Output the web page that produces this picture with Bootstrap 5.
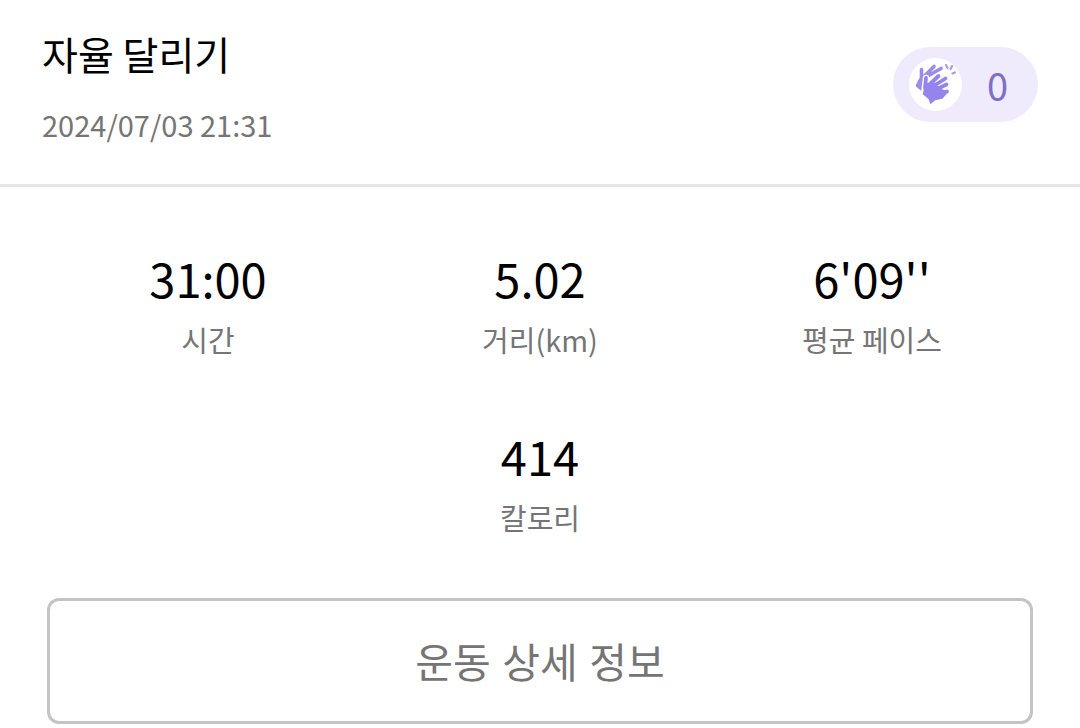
<!DOCTYPE html>
<html lang="ko">
<head>
<meta charset="utf-8">
<meta name="viewport" content="width=device-width, initial-scale=1">
<title>자율 달리기</title>
<link href="https://cdn.jsdelivr.net/npm/bootstrap@5.3.0/dist/css/bootstrap.min.css" rel="stylesheet">
<style>
  body { font-family: "Noto Sans CJK KR", sans-serif; font-feature-settings: "locl" 0; color: #000; background: #fff; }
  .run-head { padding: 23px 42px 36px; border-bottom: 3px solid #e6e6e6; }
  .run-title { font-size: 39px; line-height: 60px; font-weight: 400; }
  .run-date { font-size: 29px; line-height: 48px; color: #757575; margin-top: 17px; }
  .clap-btn { height: 75px; padding: 0 30px 0 16px; background: #efebfc; color: #7f6fc8; font-size: 38px; line-height: 60px; border: 0; gap: 25px; margin-top: 24px; }
  .clap-disc { width: 53px; height: 53px; background: #fff; }
  .clap-disc svg { display: block; }
  .run-stats { padding: 56px 42px 0; row-gap: 56px; }
  .stat-value { font-size: 47px; line-height: 70px; }
  .stat-label { font-size: 29px; line-height: 52px; color: #757575; }
  .detail-wrap { padding: 55px 47px 0; }
  .detail-btn { height: 126px; border: 3px solid #c4c4c4; border-radius: 12px; font-size: 41px; color: #757575; }
</style>
</head>
<body>
<header class="run-head d-flex justify-content-between align-items-start">
  <div>
    <h1 class="run-title mb-0">자율 달리기</h1>
    <p class="run-date mb-0">2024/07/03 21:31</p>
  </div>
  <button type="button" class="clap-btn btn rounded-pill d-flex align-items-center">
    <span class="clap-disc rounded-circle">
      <svg width="53" height="53" viewBox="0 0 53 53" fill="none" stroke-linecap="round" stroke-linejoin="round" aria-hidden="true">
        <g stroke="#9d8be6" stroke-width="3.6">
          <path d="M12.500 11.500V20L8.500 27.500L12 30.500"/>
          <path d="M12.500 21L25 8.500M17 19L32 10.500"/>
          <path d="M12.500 20V28"/>
        </g>
        <g stroke="#fff" stroke-width="6.400">
          <path d="M17 20L15.500 33M20 28L29.500 18"/>
        </g>
        <g stroke="#9583ee" stroke-width="3.800">
          <path d="M17 20L16 30M19 28L29.500 18M23 29L36.500 20.500M26 32L37.500 26.500M28 36L38 33.500"/>
        </g>
        <path d="M17 26L14.500 36L20.500 41L21.700 45L26 41.500L33 40L38 34.500L31 31L25 25Z" fill="#9583ee" stroke="#9583ee" stroke-width="1.600"/>
        <path d="M37 7L38.500 10M43 8L41.500 11M46 14.500L43.500 15.500" stroke="#a99bea" stroke-width="2.200"/>
      </svg>
    </span><span>0</span>
  </button>
</header>
<main>
  <dl class="run-stats row g-0 text-center mb-0">
    <div class="col-4 d-flex flex-column-reverse"><dt class="stat-label fw-normal">시간</dt><dd class="stat-value mb-0">31:00</dd></div>
    <div class="col-4 d-flex flex-column-reverse"><dt class="stat-label fw-normal">거리(km)</dt><dd class="stat-value mb-0">5.02</dd></div>
    <div class="col-4 d-flex flex-column-reverse"><dt class="stat-label fw-normal">평균 페이스</dt><dd class="stat-value mb-0">6'09''</dd></div>
    <div class="col-12 d-flex flex-column-reverse"><dt class="stat-label fw-normal">칼로리</dt><dd class="stat-value mb-0">414</dd></div>
  </dl>
  <div class="detail-wrap"><button type="button" class="detail-btn btn w-100">운동 상세 정보</button></div>
</main>
<script src="https://cdn.jsdelivr.net/npm/bootstrap@5.3.0/dist/js/bootstrap.bundle.min.js"></script>
</body>
</html>
